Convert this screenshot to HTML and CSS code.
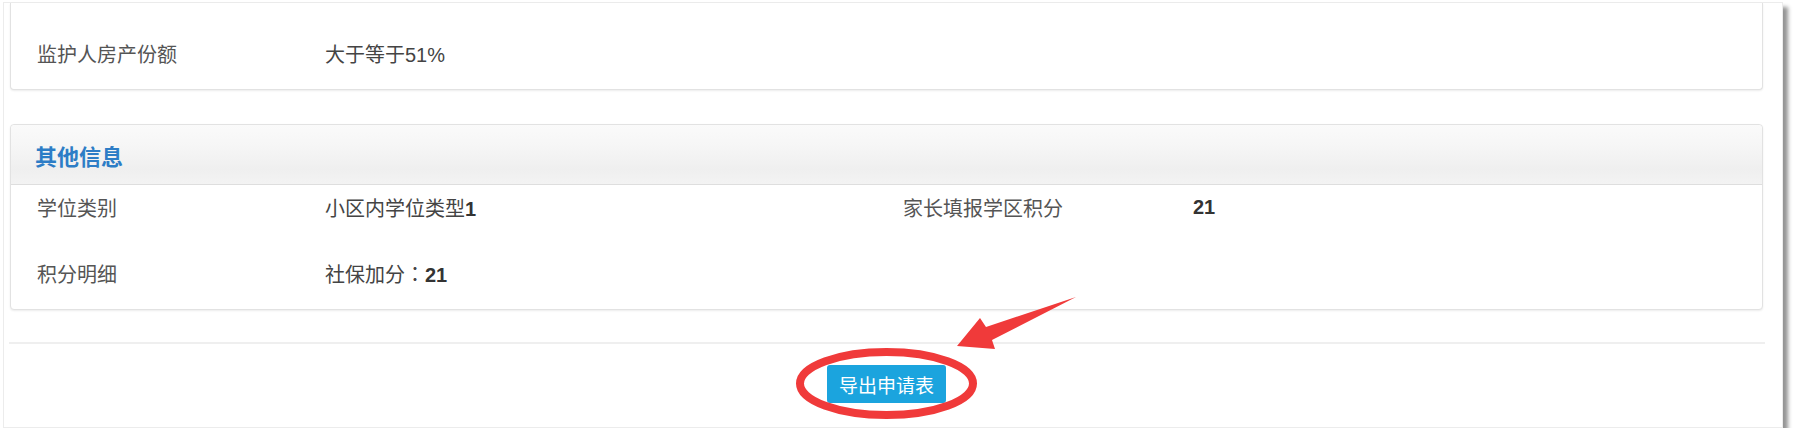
FILE: index.html
```html
<!DOCTYPE html>
<html lang="zh-CN">
<head>
<meta charset="utf-8">
<title>申请详情</title>
<link rel="stylesheet" href="styles.css">
</head>
<body>
<div class="frame">
  <section class="card card-cut">
    <div class="card-body">
      <div class="row">
        <span class="label">监护人房产份额</span>
        <span class="value">大于等于51%</span>
      </div>
    </div>
  </section>

  <section class="card card-other">
    <header class="card-head">其他信息</header>
    <div class="card-body">
      <div class="row">
        <span class="label">学位类别</span>
        <span class="value">小区内学位类型<b>1</b></span>
        <span class="label">家长填报学区积分</span>
        <span class="value"><b>21</b></span>
      </div>
      <div class="row">
        <span class="label">积分明细</span>
        <span class="value">社保加分<span class="colon" lang="zh-TW">：</span><b>21</b></span>
      </div>
    </div>
  </section>

  <hr class="divider">

  <div class="actions">
    <button class="btn-export" type="button">导出申请表</button>
  </div>

  <svg class="annotation" width="1798" height="444" viewBox="0 0 1798 444" aria-hidden="true">
    <ellipse cx="886.5" cy="383.5" rx="86.5" ry="31.5" fill="none" stroke="#f03a3a" stroke-width="8"/>
    <polygon points="957,346 980,318 986,327 1076,297 992,340 995,349" fill="#f03a3a"/>
  </svg>
</div>
</body>
</html>
```

FILE: styles.css
```css
* { box-sizing: border-box; }

html, body {
  margin: 0;
  padding: 0;
  background: #ffffff;
}

body {
  font-family: "Liberation Sans", "Noto Sans CJK SC", sans-serif;
  font-size: 20px;
  color: #555555;
}

.frame {
  position: relative;
  margin: 2px 0 0 3px;
  width: 1780px;
  height: 426px;
  border: 1px solid #ececec;
  background: #ffffff;
  box-shadow: 5px 5px 4px rgba(0, 0, 0, 0.42);
  display: flex;
  flex-direction: column;
}

.card {
  margin: 0 19px 0 6px;
  border: 1px solid #e2e2e2;
  border-radius: 4px;
  background: #ffffff;
  box-shadow: 0 1px 2px rgba(0, 0, 0, 0.08);
}

.card-cut {
  border-top: none;
  border-top-left-radius: 0;
  border-top-right-radius: 0;
}

.card-cut .card-body {
  padding-top: 28px;
}

.card-other {
  margin-top: 34px;
}

.card-head {
  height: 60px;
  display: flex;
  align-items: center;
  padding-left: 24px;
  font-size: 22px;
  font-weight: bold;
  color: #2d7dc6;
  background: linear-gradient(#fafafa 0%, #f6f6f6 35%, #efefef 75%, #f3f3f3 100%);
  border-bottom: 1px solid #dedede;
  border-radius: 4px 4px 0 0;
}

.card-body {
  padding: 0 20px 14px 26px;
  display: flex;
  flex-direction: column;
  gap: 22px;
}

.row {
  display: grid;
  grid-template-columns: 288px 578px 290px 1fr;
  height: 44px;
  align-items: center;
}

.value {
  color: #444444;
}

.value b {
  font-weight: bold;
  color: #333333;
}

.colon {
  font-family: "Noto Sans CJK TC", sans-serif;
}

.divider {
  margin: 32px 17px 0 5px;
  border: none;
  border-top: 2px solid #efefef;
  height: 0;
}

.actions {
  margin: 21px 19px 0 6px;
  display: flex;
  justify-content: center;
}

.btn-export {
  width: 119px;
  height: 38px;
  border: none;
  border-radius: 3px;
  background: #1ba4de;
  color: #ffffff;
  font-family: "Liberation Sans", "Noto Sans CJK SC", sans-serif;
  font-size: 19px;
  padding: 0;
}

.annotation {
  position: absolute;
  left: -4px;
  top: -3px;
  pointer-events: none;
}
```
